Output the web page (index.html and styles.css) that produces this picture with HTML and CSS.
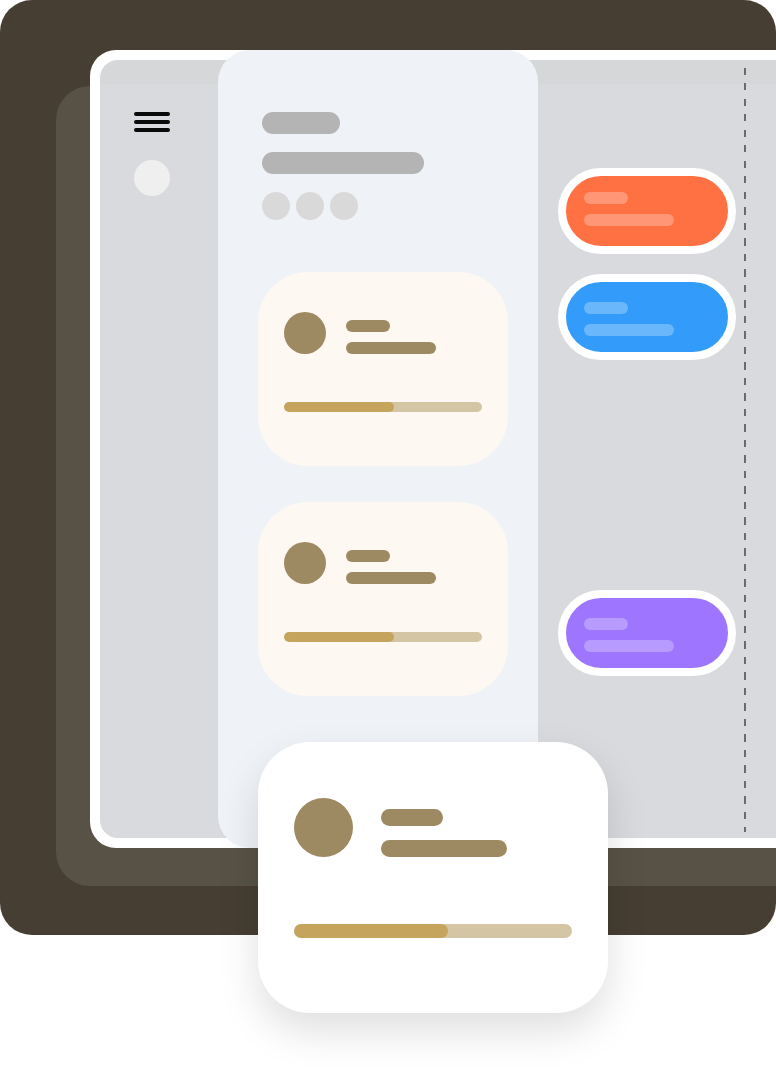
FILE: index.html
```html
<!DOCTYPE html>
<html lang="en">
<head>
<meta charset="utf-8">
<title>Dashboard illustration</title>
<link rel="stylesheet" href="styles.css">
</head>
<body>
<div class="scene">
  <div class="backdrop"></div>
  <div class="backdrop-inner"></div>
  <div class="frame">
    <div class="screen">
      <aside class="sidebar">
        <div class="menu"><span></span><span></span><span></span></div>
        <div class="profile-dot"></div>
      </aside>
      <section class="panel">
        <div class="bar bar-short"></div>
        <div class="bar bar-long"></div>
        <div class="dots"><span></span><span></span><span></span></div>
        <div class="card card-first">
          <div class="card-head">
            <div class="avatar"></div>
            <div class="meta"><span class="line line-s"></span><span class="line line-l"></span></div>
          </div>
          <div class="progress"><div class="fill" style="width:55.5%"></div></div>
        </div>
        <div class="card card-second">
          <div class="card-head">
            <div class="avatar"></div>
            <div class="meta"><span class="line line-s"></span><span class="line line-l"></span></div>
          </div>
          <div class="progress"><div class="fill" style="width:55.5%"></div></div>
        </div>
      </section>
      <div class="lane">
        <div class="pills">
          <div class="pill pill-orange"><span class="pl pl-s"></span><span class="pl pl-l"></span></div>
          <div class="pill pill-blue"><span class="pl pl-s"></span><span class="pl pl-l"></span></div>
          <div class="pill pill-purple"><span class="pl pl-s"></span><span class="pl pl-l"></span></div>
        </div>
        <div class="dash"></div>
      </div>
    </div>
  </div>
  <div class="card card-lg">
    <div class="card-head">
      <div class="avatar"></div>
      <div class="meta"><span class="line line-s"></span><span class="line line-l"></span></div>
    </div>
    <div class="progress"><div class="fill" style="width:55.4%"></div></div>
  </div>
</div>
</body>
</html>
```

FILE: styles.css
```css
* { box-sizing: border-box; }
html, body {
  margin: 0;
  padding: 0;
  background: #ffffff;
  font-family: "Liberation Sans", Arial, sans-serif;
}
body { width: 776px; height: 1070px; overflow: hidden; }

.scene {
  position: relative;
  width: 776px;
  height: 1070px;
  overflow: hidden;
}

.backdrop {
  position: absolute;
  left: 0;
  top: 0;
  width: 776px;
  height: 935px;
  background: #463e32;
  border-radius: 32px;
}

.backdrop-inner {
  position: absolute;
  left: 56px;
  top: 86px;
  width: 780px;
  height: 800px;
  background: #575245;
  border-radius: 34px 0 0 34px;
}

.frame {
  position: absolute;
  left: 90px;
  top: 50px;
  width: 740px;
  height: 798px;
  background: #ffffff;
  border-radius: 26px;
  padding: 10px;
}

.screen {
  display: flex;
  height: 100%;
  border-radius: 18px;
  background: linear-gradient(#d6d7d9 0 24px, #d9dadd 24px);
}

/* sidebar */
.sidebar {
  width: 118px;
  flex: none;
  padding: 52px 0 0 34px;
}
.menu {
  width: 36px;
  display: flex;
  flex-direction: column;
  gap: 4.5px;
}
.menu span {
  display: block;
  height: 3.5px;
  border-radius: 2px;
  background: #0a0a0a;
}
.profile-dot {
  width: 36px;
  height: 36px;
  margin-top: 28px;
  border-radius: 50%;
  background: #efefef;
}

/* middle panel */
.panel {
  width: 320px;
  flex: none;
  margin: -10px 0;
  padding: 62px 0 0 40px;
  background: #eff3f8;
  border-radius: 32px;
}
.bar {
  height: 22px;
  margin-left: 4px;
  border-radius: 11px;
  background: #b4b4b4;
}
.bar-short { width: 78px; }
.bar-long { width: 162px; margin-top: 18px; }
.dots {
  display: flex;
  gap: 6px;
  margin: 18px 0 0 4px;
}
.dots span {
  width: 28px;
  height: 28px;
  border-radius: 50%;
  background: #d9d9d9;
}

/* cards */
.card {
  width: 250px;
  height: 194px;
  padding: 40px 26px 0;
  border-radius: 50px;
  background: #fef8f2;
}
.card-first { margin-top: 52px; }
.card-second { margin-top: 36px; }
.card-head {
  display: flex;
  align-items: flex-start;
  gap: 20px;
}
.avatar {
  width: 42px;
  height: 42px;
  flex: none;
  border-radius: 50%;
  background: #9e8a62;
}
.meta {
  display: flex;
  flex-direction: column;
  gap: 10px;
  padding-top: 8px;
}
.line {
  display: block;
  height: 12px;
  border-radius: 6px;
  background: #9e8a62;
}
.line-s { width: 44px; }
.line-l { width: 90px; }
.progress {
  height: 10px;
  margin-top: 48px;
  border-radius: 5px;
  background: #d4c5a4;
  overflow: hidden;
}
.fill {
  height: 100%;
  border-radius: 5px;
  background: #c5a55d;
}

/* large floating card */
.card-lg {
  position: absolute;
  left: 258px;
  top: 742px;
  width: 350px;
  height: 271px;
  padding: 56px 36px 0;
  border-radius: 52px;
  background: #ffffff;
  box-shadow: 0 18px 40px rgba(0, 0, 0, 0.13);
}
.card-lg .card-head { gap: 28px; }
.card-lg .avatar { width: 59px; height: 59px; }
.card-lg .meta { gap: 14px; padding-top: 11px; }
.card-lg .line { height: 17px; border-radius: 9px; }
.card-lg .line-s { width: 62px; }
.card-lg .line-l { width: 126px; }
.card-lg .progress { height: 14px; margin-top: 67px; border-radius: 7px; }
.card-lg .fill { border-radius: 7px; }

/* right lane */
.lane {
  display: flex;
  flex: none;
  padding-left: 20px;
}
.pills {
  width: 178px;
  padding-top: 108px;
  display: flex;
  flex-direction: column;
}
.pill {
  height: 86px;
  border: 8px solid #ffffff;
  border-radius: 43px;
  padding: 20px 0 0 18px;
  display: flex;
  flex-direction: column;
  gap: 10px;
}
.pill-orange { background: #ff7043; padding-top: 16px; }
.pill-blue { background: #339cfa; margin-top: 20px; }
.pill-purple { background: #9d75fe; margin-top: 230px; }
.pl {
  display: block;
  height: 12px;
  border-radius: 6px;
  background: rgba(255, 255, 255, 0.28);
}
.pl-s { width: 44px; }
.pl-l { width: 90px; }

.dash {
  width: 2px;
  margin: 8px 0 6px 8px;
  background: repeating-linear-gradient(to bottom, #6b6b6b 0 7px, transparent 7px 15.5px);
}
```
